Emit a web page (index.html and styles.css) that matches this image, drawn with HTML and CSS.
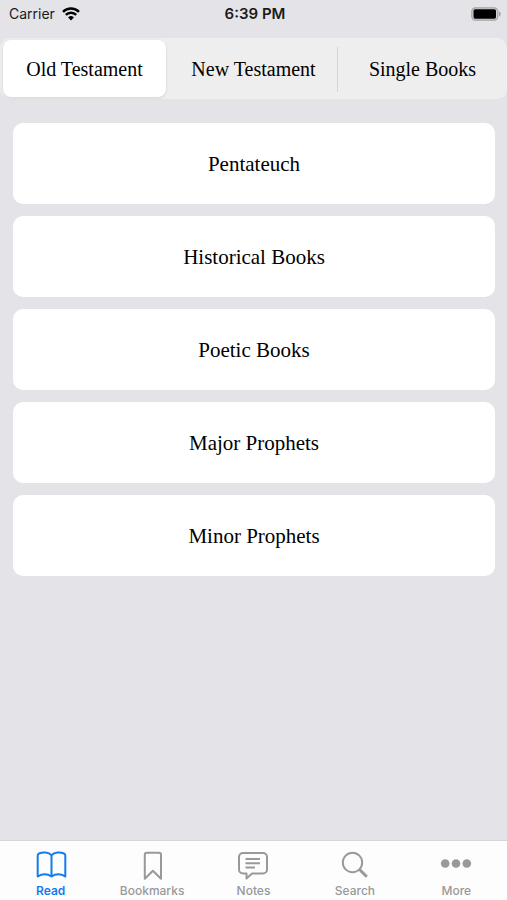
FILE: index.html
```html
<!DOCTYPE html>
<html lang="en">
<head>
<meta charset="utf-8">
<meta name="viewport" content="width=device-width, initial-scale=1">
<title>Read</title>
<link rel="stylesheet" href="styles.css">
</head>
<body>
<header class="status">
  <div class="carrier">
    <span>Carrier</span>
    <svg class="wifi" viewBox="0 0 18 14" aria-hidden="true">
      <path d="M1 4.8a11.300 11.300 0 0 1 16 0M3.800 7.900a7.300 7.300 0 0 1 10.400 0" fill="none" stroke="currentColor" stroke-width="2.4"/>
      <path d="M9 13.400 6.100 10.400a4.100 4.100 0 0 1 5.800 0z" fill="currentColor"/>
    </svg>
  </div>
  <time class="clock">6:39 PM</time>
  <svg class="battery" viewBox="0 0 30 14" aria-hidden="true">
    <rect x="0.8" y="0.8" width="26" height="12.4" rx="3.6" fill="#d2d2d4" stroke="#a3a3a6" stroke-width="1.2"/>
    <rect x="2.5" y="2.3" width="22.500" height="9.400" rx="1.6" fill="#000"/>
    <path d="M28 4.600c2.400.8 2.400 4 0 4.800z" fill="#a3a3a6"/>
  </svg>
</header>
<nav class="segments" aria-label="Collections">
  <button class="segment selected" type="button" aria-pressed="true">Old Testament</button>
  <button class="segment" type="button">New Testament</button>
  <button class="segment divided" type="button">Single Books</button>
</nav>
<main class="books">
  <button class="book" type="button">Pentateuch</button>
  <button class="book" type="button">Historical Books</button>
  <button class="book" type="button">Poetic Books</button>
  <button class="book" type="button">Major Prophets</button>
  <button class="book" type="button">Minor Prophets</button>
</main>
<nav class="tabs" aria-label="Main">
  <a class="tab active" href="#read" aria-current="page">
    <svg class="icon" viewBox="0 0 32 32" aria-hidden="true"><path d="M16.500 6.200C13.500 3 8 2.800 4 4.500Q2.700 5.100 2.700 6.500V27.500C7 24.800 12.500 24.800 16.500 27.500 20.500 24.800 26 24.800 30.300 27.500V6.500Q30.300 5.100 29 4.500C25 2.800 19.500 3 16.500 6.200zV27.500"/></svg>
    <span>Read</span>
  </a>
  <a class="tab" href="#bookmarks">
    <svg class="icon" viewBox="0 0 32 32" aria-hidden="true"><path d="M8.800 5.800a2 2 0 0 1 2-2h12.200a2 2 0 0 1 2 2v24l-8.100-8-8.100 8z"/></svg>
    <span>Bookmarks</span>
  </a>
  <a class="tab" href="#notes">
    <svg class="icon" viewBox="0 0 32 32" aria-hidden="true"><path d="M6 4h20a4 4 0 0 1 4 4v12.500a4 4 0 0 1-4 4H15l-5.500 5V24.500H6a4 4 0 0 1-4-4V8a4 4 0 0 1 4-4z"/><path class="thin" d="M8.500 10h14.500M8.500 14.300h14.500M8.500 18.600h9.500"/></svg>
    <span>Notes</span>
  </a>
  <a class="tab" href="#search">
    <svg class="icon" viewBox="0 0 32 32" aria-hidden="true"><circle cx="13.500" cy="13.500" r="9.700"/><path class="handle" d="m20.500 20.500 7.300 7.300"/></svg>
    <span>Search</span>
  </a>
  <a class="tab" href="#more">
    <svg class="icon dots" viewBox="0 0 32 32" aria-hidden="true"><circle cx="5.200" cy="14.500" r="4.300"/><circle cx="16" cy="14.500" r="4.300"/><circle cx="26.800" cy="14.500" r="4.300"/></svg>
    <span>More</span>
  </a>
</nav>
</body>
</html>
```
FILE: styles.css
```css
* { box-sizing: border-box; }

body {
  margin: 0;
  min-height: 100vh;
  display: flex;
  flex-direction: column;
  background: #e4e3e8;
  color: #000;
  font-family: Inter, "Liberation Sans", sans-serif;
}

button {
  margin: 0;
  padding: 2px 0 0;
  border: 0;
  color: inherit;
  font-family: "Liberation Serif", "Times New Roman", serif;
}

.status {
  display: grid;
  grid-template-columns: 1fr auto 1fr;
  align-items: center;
  height: 27px;
  padding: 0 6px 0 9px;
  font-size: 14px;
  color: #1a1a1c;
}

.carrier {
  display: flex;
  align-items: center;
  gap: 7px;
}

.wifi {
  width: 18px;
  height: 14px;
  color: #000;
}

.clock {
  font-size: 15px;
  font-weight: 600;
}

.battery {
  justify-self: end;
  width: 30px;
  height: 14px;
}

.segments {
  display: grid;
  grid-template-columns: repeat(3, 1fr);
  gap: 6px;
  margin-top: 11px;
  padding: 2px 3px;
  border-radius: 10px;
  background: #eeeeef;
}

.segment {
  height: 57px;
  border-radius: 8px;
  background: transparent;
  font-size: 20px;
}

.segment.selected {
  background: #fff;
  box-shadow: 0 1px 3px rgba(0, 0, 0, 0.12);
}

.divided {
  position: relative;
}

.divided::before {
  content: "";
  position: absolute;
  left: -4px;
  top: 7px;
  bottom: 5px;
  width: 1px;
  background: #d6d6d9;
}

.books {
  flex: 1;
  display: flex;
  flex-direction: column;
  gap: 12px;
  padding: 24px 12px 24px 13px;
}

.book {
  height: 81px;
  border-radius: 10px;
  background: #fff;
  font-size: 21px;
}

.tabs {
  display: grid;
  grid-template-columns: repeat(5, 1fr);
  height: 60px;
  border-top: 1px solid #d5d5d8;
  background: #fdfdfd;
}

.tab {
  display: flex;
  flex-direction: column;
  align-items: center;
  gap: 2px;
  padding-top: 8px;
  color: #999;
  font-size: 12px;
  font-weight: 500;
  line-height: 16px;
  text-decoration: none;
}

.active {
  color: #117cf0;
  font-weight: 600;
}

.icon {
  width: 32px;
  height: 32px;
  fill: none;
  stroke: currentColor;
  stroke-width: 2;
  stroke-linejoin: round;
}

.thin { stroke-width: 2; }
.handle { stroke-width: 3; }

.dots {
  fill: currentColor;
  stroke: none;
}
```
